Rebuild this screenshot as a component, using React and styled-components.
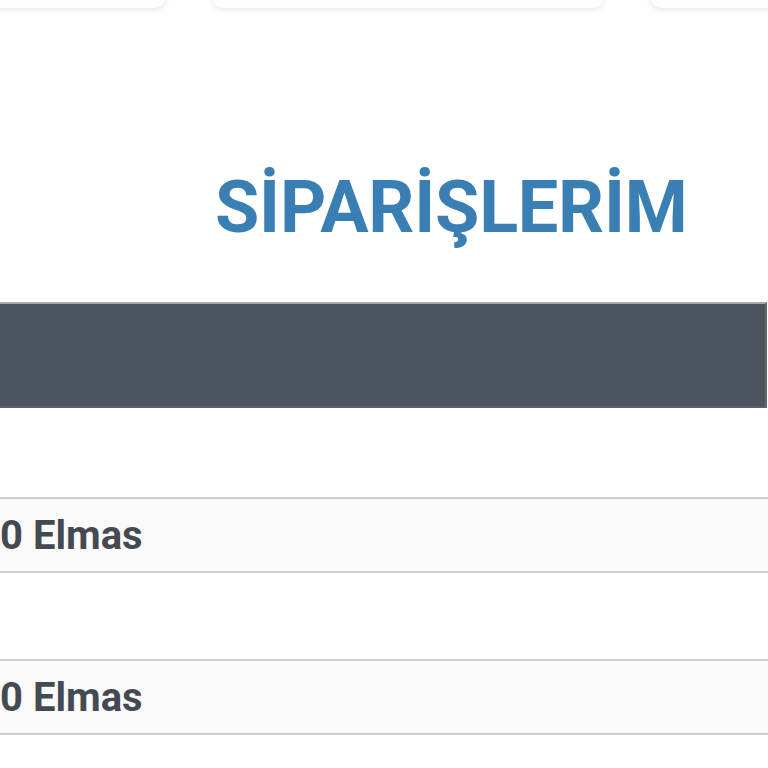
import styled, { createGlobalStyle } from "styled-components";

const GlobalStyle = createGlobalStyle`
	html, body {
		margin: 0;
		padding: 0;
		background: #ffffff;
		overflow: hidden;
	}
	body {
		font-family: Roboto, "Liberation Sans", sans-serif;
	}
`;

const Page = styled.div`
	width: 768px;
	height: 768px;
	overflow: hidden;
`;

const TabRow = styled.div`
	display: flex;
	gap: ${(p) => p.$gap}px;
	margin-top: -40px;
	margin-left: -20px;
	height: 48px;
`;

const Tab = styled.div`
	flex: 0 0 ${(p) => p.$w}px;
	height: 48px;
	background: #fdfdfd;
	border-radius: 10px;
	box-shadow: 0 2px 6px rgba(0, 0, 0, 0.1);
`;

const Title = styled.h1`
	margin: 0;
	padding: 160px 0 0 215px;
	font-size: 72px;
	font-weight: 700;
	line-height: 80px;
	color: #3a7fb3;
	letter-spacing: -0.25px;
`;

const Header = styled.div`
	margin-top: 54px;
	margin-left: -20px;
	width: 785px;
	height: 102px;
	background: #4b5560;
	border-top: 2px solid #a4a9ae;
	border-bottom: 2px solid #5a6168;
	border-right: 2px solid #626870;
	box-sizing: content-box;
`;

const List = styled.div`
	display: flex;
	flex-direction: column;
	gap: 86px;
	margin-top: 89px;
	margin-left: -20px;
`;

const Row = styled.div`
	width: 780px;
	height: 72px;
	background: #fafafa;
	border: 2px solid #cfcfcf;
	display: flex;
	align-items: center;
	padding-left: 18px;
	box-sizing: content-box;
	font-size: 40px;
	font-weight: 700;
	color: #454a52;
	letter-spacing: 0;
`;

export default function App() {
	return (
		<Page>
			<GlobalStyle />
			<TabRow $gap={48}>
				<Tab $w={185} />
				<Tab $w={390} />
				<Tab $w={200} />
			</TabRow>
			<Title>SİPARİŞLERİM</Title>
			<Header />
			<List>
				<Row>0 Elmas</Row>
				<Row>0 Elmas</Row>
			</List>
		</Page>
	);
}
